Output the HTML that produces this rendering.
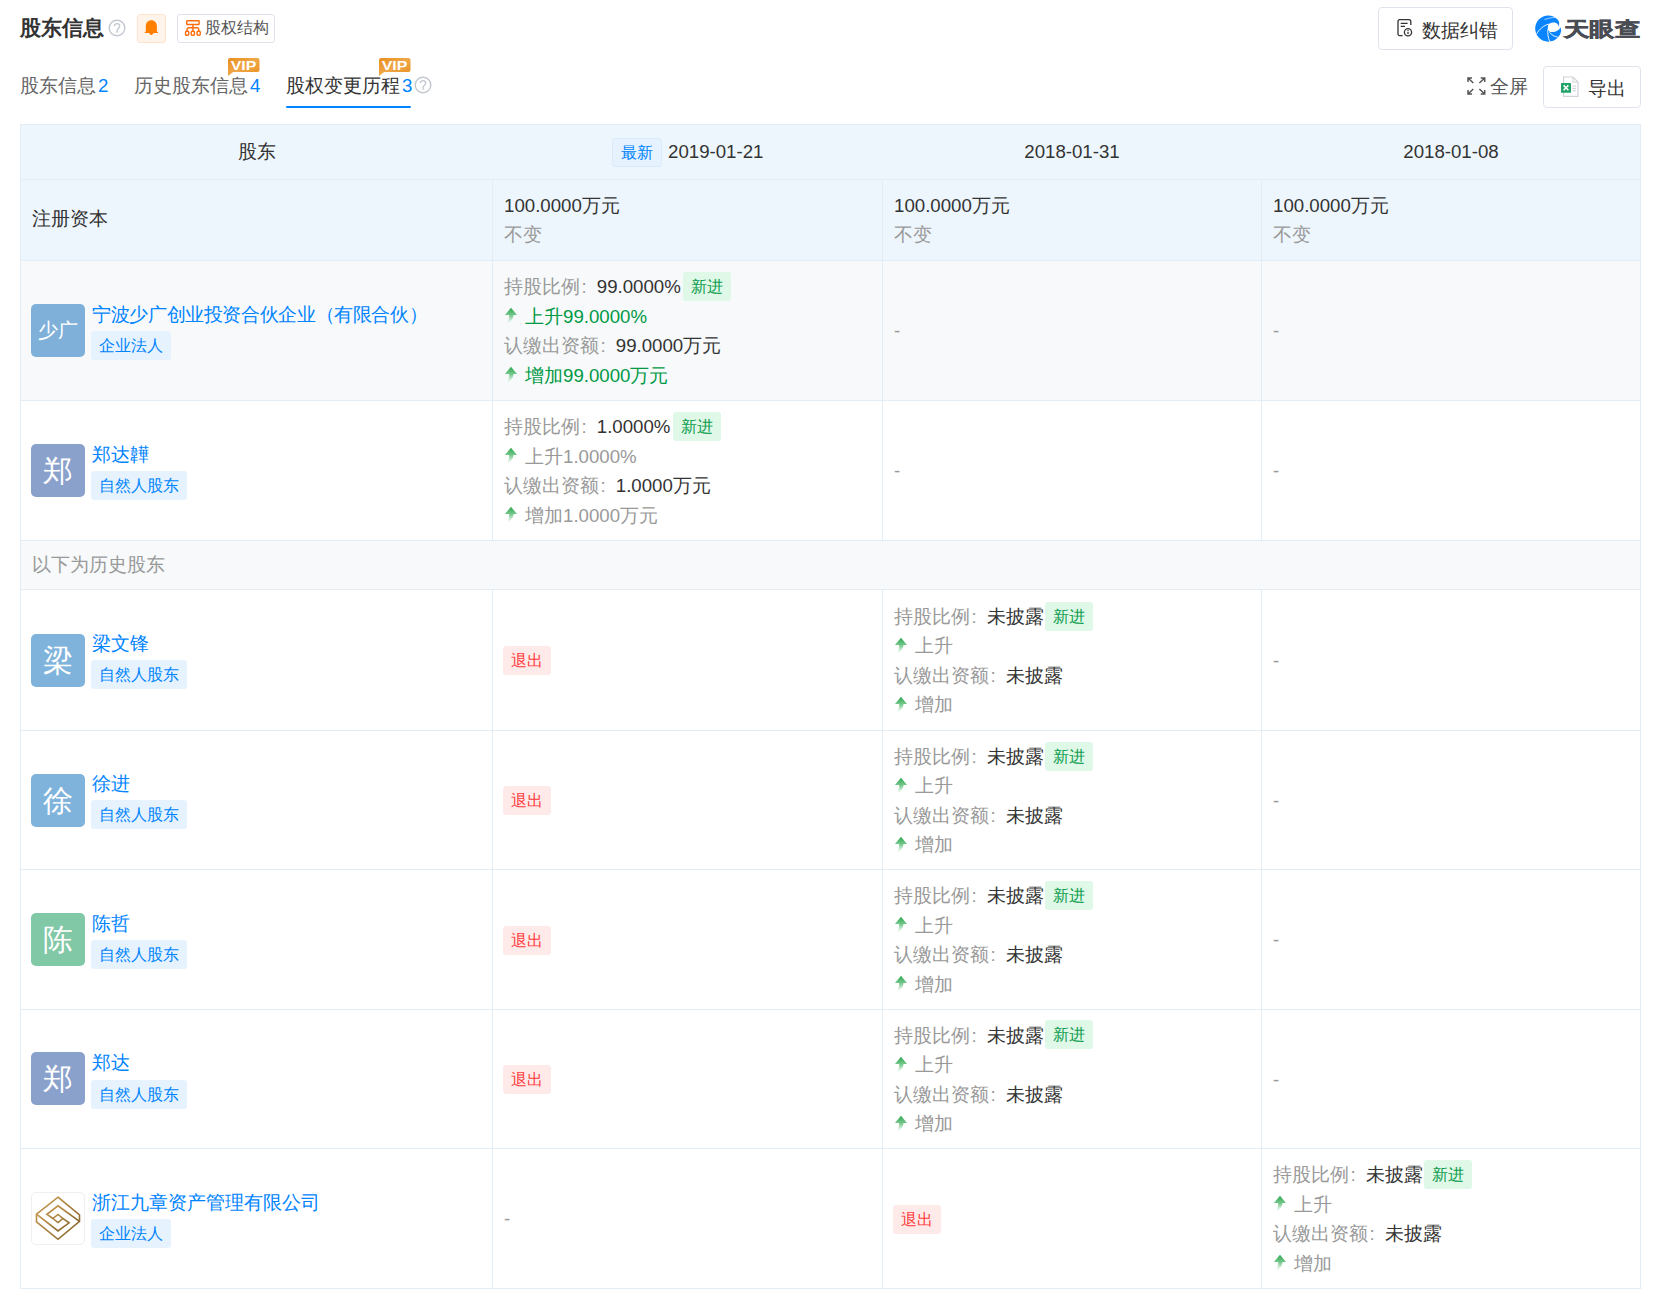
<!DOCTYPE html><html><head><meta charset="utf-8"><style>
*{box-sizing:border-box;margin:0;padding:0}
html,body{width:1659px;height:1311px;overflow:hidden;background:#fff}
body{position:relative;font-family:"Liberation Sans",sans-serif;color:#333;font-size:18.67px}
.ab{position:absolute;white-space:nowrap}
.t{position:absolute;white-space:nowrap;line-height:1}
.hl{position:absolute;height:1px;background:#e3edf6}
.vl{position:absolute;width:1px;background:#e3edf6}
.bg{position:absolute}
.tag{position:absolute;height:29px;border-radius:3px;font-size:16px;line-height:30px;text-align:center}
.tb{background:#e6f3fe;color:#0084ff}
.tg{background:#dff8e8;color:#0f9d4e}
.tr{background:#ffeaea;color:#ff3b3b}
.av{position:absolute;width:54px;height:53px;border-radius:5px;color:#fff;text-align:center;line-height:53px;font-size:28px}
.nm{color:#0084ff}
.gy{color:#999}
.gn{color:#009a44}
.dk{color:#333}
.cl{display:inline-block;width:16.8px;padding-left:1.5px}
</style></head><body>
<div class="t" style="left:20px;top:18px;font-size:21.33px;font-weight:bold;color:#333">股东信息</div>
<svg class="ab" style="left:108px;top:19px" width="18" height="18" viewBox="0 0 18 18"><circle cx="9" cy="9" r="7.8" fill="none" stroke="#c3c8d0" stroke-width="1.4"/><path d="M6.4 7.3c0-1.6 1.2-2.7 2.7-2.7s2.6 1.1 2.6 2.5c0 2-2.6 2.2-2.6 4.4v2.3" fill="none" stroke="#c3c8d0" stroke-width="1.4"/></svg>
<div class="ab" style="left:137px;top:14px;width:29px;height:29px;border:1px solid #ffe3cc;background:#fff4ea;border-radius:3px"></div>
<svg class="ab" style="left:144px;top:20px" width="15" height="16" viewBox="0 0 15 16"><path d="M7.3 .2C4 .2 1.8 2.8 1.8 6.2V11.6L.7 12.2V13.1H14V12.2L12.9 11.6V6.2C12.9 2.8 10.6 .2 7.3 .2z" fill="#ff7f00"/><path d="M5.3 13.1h4c0 1.1-.9 1.9-2 1.9s-2-.8-2-1.9z" fill="#ff7f00"/></svg>
<div class="ab" style="left:177px;top:14px;width:98px;height:29px;border:1px solid #dfe4ec;border-radius:3px"></div>
<svg class="ab" style="left:184px;top:19px" width="18" height="18" viewBox="0 0 18 18"><g fill="none" stroke="#ff6a0a" stroke-width="1.4"><rect x="2.7" y="1.7" width="12.4" height="3.8" rx=".6"/><path d="M8.9 5.5v3.3M3 12.3v-1.6a1.9 1.9 0 0 1 1.9-1.9h8a1.9 1.9 0 0 1 1.9 1.9v1.6M8.9 8.8v3.5"/><rect x="1.5" y="12.3" width="3.3" height="4" rx="1.2"/><rect x="7.2" y="12.3" width="3.3" height="4" rx="1.2"/><rect x="13" y="12.3" width="3.3" height="4" rx="1.2"/></g></svg>
<div class="t" style="left:205px;top:20px;font-size:16px;color:#555">股权结构</div>
<div class="t" style="left:20px;top:77px;color:#666">股东信息<span style="color:#0084ff;margin-left:2px">2</span></div>
<div class="t" style="left:134px;top:77px;color:#666">历史股东信息<span style="color:#0084ff;margin-left:2px">4</span></div>
<div class="t" style="left:286px;top:77px;color:#333">股权变更历程<span style="color:#0084ff;margin-left:2px">3</span></div>
<svg class="ab" style="left:414px;top:76px" width="18" height="18" viewBox="0 0 18 18"><circle cx="9" cy="9" r="7.8" fill="none" stroke="#c3c8d0" stroke-width="1.4"/><path d="M6.4 7.3c0-1.6 1.2-2.7 2.7-2.7s2.6 1.1 2.6 2.5c0 2-2.6 2.2-2.6 4.4v2.3" fill="none" stroke="#c3c8d0" stroke-width="1.4"/></svg>
<div class="ab" style="left:286px;top:106px;width:125px;height:2px;border-radius:1px;background:#0084ff"></div>
<svg class="ab" style="left:227px;top:57px" width="34" height="20" viewBox="0 0 34 20"><defs><linearGradient id="vg228" x1="0" y1="0" x2="1" y2="1"><stop offset="0" stop-color="#e88f1e"/><stop offset=".5" stop-color="#f0a748"/><stop offset="1" stop-color="#e8901f"/></linearGradient></defs><path d="M3 1h27.5a2 2 0 0 1 2 2v10a2 2 0 0 1-2 2H6.2L1 19V3a2 2 0 0 1 2-2z" fill="url(#vg228)"/><text x="3.8" y="12.8" font-family="Liberation Sans" font-weight="bold" font-size="13" fill="#fff" textLength="25.5" lengthAdjust="spacingAndGlyphs">VIP</text></svg>
<svg class="ab" style="left:378px;top:57px" width="34" height="20" viewBox="0 0 34 20"><defs><linearGradient id="vg379" x1="0" y1="0" x2="1" y2="1"><stop offset="0" stop-color="#e88f1e"/><stop offset=".5" stop-color="#f0a748"/><stop offset="1" stop-color="#e8901f"/></linearGradient></defs><path d="M3 1h27.5a2 2 0 0 1 2 2v10a2 2 0 0 1-2 2H6.2L1 19V3a2 2 0 0 1 2-2z" fill="url(#vg379)"/><text x="3.8" y="12.8" font-family="Liberation Sans" font-weight="bold" font-size="13" fill="#fff" textLength="25.5" lengthAdjust="spacingAndGlyphs">VIP</text></svg>
<div class="ab" style="left:1378px;top:7px;width:135px;height:43px;border:1px solid #dfe4ec;border-radius:4px"></div>
<svg class="ab" style="left:1397px;top:19px" width="17" height="18" viewBox="0 0 17 18"><g fill="none" stroke="#333" stroke-width="1.3"><path d="M5.6 16.6H2.6A1.6 1.6 0 0 1 1 15V2.3A1.6 1.6 0 0 1 2.6.7h9.6a1.6 1.6 0 0 1 1.6 1.6V5.9"/><path d="M3.7 4.4h6.9M3.7 7.4h4.3"/><circle cx="11" cy="13.2" r="3.6"/><path d="M11 12.7v2.2"/></g><circle cx="11" cy="11.4" r=".7" fill="#333"/></svg>
<div class="t" style="left:1422px;top:22px;color:#333">数据纠错</div>
<svg class="ab" style="left:1533px;top:14px" width="30" height="30" viewBox="0 0 30 30"><circle cx="15.3" cy="14.6" r="13.1" fill="#0a84ff"/><path d="M15.8 10.1C17.5 8.8 20.5 8 23 9 24.5 9.6 25.2 11 25.4 12.1L27.5 13.5C26.5 15.5 24.5 17 22 17.7 20 18.2 18 18.2 17 18 15.5 17 14.6 15 14.8 13 15 11.8 15.3 10.8 15.8 10.1z" fill="#fff"/><path d="M21.8 3.3C23.6 3.9 25.3 5.6 26 8 26.4 9.8 26 11.3 25.4 12.1L27.5 13.5C28 14.5 28.2 15.5 27.9 16.3H30V0H21.8z" fill="#fff"/><g fill="none" stroke="#fff" stroke-width=".9"><path d="M3.4 20.3C6.5 15 10.5 11.5 15.8 10.1"/><path d="M15 14.9C14.4 19 15 23.5 16.8 27.9"/><path d="M16.5 18.2C18.5 21 21.5 22.6 24.8 23.1"/></g><path d="M11.4 5.5C15 4.4 19 3.5 22 3.4" fill="none" stroke="#fff" stroke-width=".6"/></svg>
<div class="t" style="left:1564px;top:19px;font-size:20px;font-weight:bold;color:#4a4c53;-webkit-text-stroke:0.5px #4a4c53;transform:scaleX(1.27);transform-origin:0 0">天眼查</div>
<svg class="ab" style="left:1467px;top:77px" width="19" height="18" viewBox="0 0 19 18"><g fill="none" stroke="#555" stroke-width="1.5"><path d="M1 5V1h4M1 1l5.3 5"/><path d="M17.7 5V1h-4M17.7 1l-5.3 5"/><path d="M1 13v4h4M1 17l5.3-5"/><path d="M17.7 13v4h-4M17.7 17l-5.3-5"/></g></svg>
<div class="t" style="left:1490px;top:78px;color:#555">全屏</div>
<div class="ab" style="left:1543px;top:66px;width:98px;height:42px;border:1px solid #dfe4ec;border-radius:4px"></div>
<svg class="ab" style="left:1560px;top:76px" width="20" height="21" viewBox="0 0 20 21"><path d="M3.6 1h9.4l5 5v14.4H3.6z" fill="#fff" stroke="#d0d3d8" stroke-width="1.2"/><path d="M13 1v5h5" fill="none" stroke="#d0d3d8" stroke-width="1.1"/><path d="M12.5 10h3.5M12.5 12.4h3.5M12.5 14.8h3.5" stroke="#c5c8cc" stroke-width=".9"/><rect x="1" y="6.9" width="10" height="9.8" rx=".5" fill="#21a366"/><path d="M3.6 9.4l4.8 4.8M8.4 9.4l-4.8 4.8" stroke="#fff" stroke-width="1.5"/></svg>
<div class="t" style="left:1588px;top:80px;color:#333">导出</div>
<div class="bg" style="left:21px;top:125px;width:1619px;height:135px;background:#eef6fd"></div>
<div class="bg" style="left:21px;top:261px;width:1619px;height:139px;background:#f7f9fb"></div>
<div class="bg" style="left:21px;top:541px;width:1619px;height:48px;background:#f7f9fb"></div>
<div class="hl" style="left:20px;top:124px;width:1621px"></div>
<div class="hl" style="left:20px;top:179px;width:1621px"></div>
<div class="hl" style="left:20px;top:260px;width:1621px"></div>
<div class="hl" style="left:20px;top:400px;width:1621px"></div>
<div class="hl" style="left:20px;top:540px;width:1621px"></div>
<div class="hl" style="left:20px;top:589px;width:1621px"></div>
<div class="hl" style="left:20px;top:730px;width:1621px"></div>
<div class="hl" style="left:20px;top:869px;width:1621px"></div>
<div class="hl" style="left:20px;top:1009px;width:1621px"></div>
<div class="hl" style="left:20px;top:1148px;width:1621px"></div>
<div class="hl" style="left:20px;top:1288px;width:1621px"></div>
<div class="vl" style="left:20px;top:124px;height:1165px"></div>
<div class="vl" style="left:1640px;top:124px;height:1165px"></div>
<div class="vl" style="left:492px;top:179px;height:362px"></div>
<div class="vl" style="left:492px;top:589px;height:700px"></div>
<div class="vl" style="left:882px;top:179px;height:362px"></div>
<div class="vl" style="left:882px;top:589px;height:700px"></div>
<div class="vl" style="left:1261px;top:179px;height:362px"></div>
<div class="vl" style="left:1261px;top:589px;height:700px"></div>
<div class="t" style="left:21px;top:143px;width:472px;text-align:center">股东</div>
<div class="tag tb" style="left:612px;top:138px;width:50px;border:1px solid #d9ebfb;line-height:28px">最新</div>
<div class="t" style="left:668px;top:143px">2019-01-21</div>
<div class="t" style="left:883px;top:143px;width:378px;text-align:center">2018-01-31</div>
<div class="t" style="left:1262px;top:143px;width:378px;text-align:center">2018-01-08</div>
<div class="t" style="left:32px;top:210px">注册资本</div>
<div class="t" style="left:504px;top:197px">100.0000万元</div>
<div class="t gy" style="left:504px;top:226px">不变</div>
<div class="t" style="left:894px;top:197px">100.0000万元</div>
<div class="t gy" style="left:894px;top:226px">不变</div>
<div class="t" style="left:1273px;top:197px">100.0000万元</div>
<div class="t gy" style="left:1273px;top:226px">不变</div>
<div class="av" style="left:31px;top:304px;background:#7fb0d9;font-size:20px">少广</div>
<div class="t nm" style="left:92px;top:305.5px;letter-spacing:-0.37px">宁波少广创业投资合伙企业（有限合伙）</div>
<div class="tag tb" style="left:91px;top:331px;width:80px">企业法人</div>
<div class="t gy" style="left:504px;top:278.0px">持股比例<span class="cl">:</span><span class="dk">99.0000%</span></div>
<div class="tag tg" style="left:683px;top:272px;width:48px">新进</div>
<div class="ab" style="left:504px;top:307.0px;width:14px;height:17px"><svg width="14" height="17" viewBox="0 0 14 17" style="position:absolute;left:0;top:0px"><defs><linearGradient id="ag1" x1="0" y1="0" x2="0" y2="1"><stop offset="0" stop-color="#30a750"/><stop offset=".5" stop-color="#7bcb92"/><stop offset="1" stop-color="#a5dcb3" stop-opacity="0"/></linearGradient></defs><path d="M7 .8L13 7.9H9.5C9.3 11.5 7.2 14.8 2.4 16.6 4.6 14 5.2 11 5.2 7.9H.9z" fill="url(#ag1)"/></svg></div>
<div class="t gn" style="left:525px;top:307.5px">上升99.0000%</div>
<div class="t gy" style="left:504px;top:337.0px">认缴出资额<span class="cl">:</span><span class="dk">99.0000万元</span></div>
<div class="ab" style="left:504px;top:366.0px;width:14px;height:17px"><svg width="14" height="17" viewBox="0 0 14 17" style="position:absolute;left:0;top:0px"><defs><linearGradient id="ag2" x1="0" y1="0" x2="0" y2="1"><stop offset="0" stop-color="#30a750"/><stop offset=".5" stop-color="#7bcb92"/><stop offset="1" stop-color="#a5dcb3" stop-opacity="0"/></linearGradient></defs><path d="M7 .8L13 7.9H9.5C9.3 11.5 7.2 14.8 2.4 16.6 4.6 14 5.2 11 5.2 7.9H.9z" fill="url(#ag2)"/></svg></div>
<div class="t gn" style="left:525px;top:366.5px">增加99.0000万元</div>
<div class="t gy" style="left:894px;top:322.0px">-</div>
<div class="t gy" style="left:1273px;top:322.0px">-</div>
<div class="av" style="left:31px;top:444px;background:#8aa1cc;font-size:29.5px">郑</div>
<div class="t nm" style="left:92px;top:445.5px">郑达韡</div>
<div class="tag tb" style="left:91px;top:471px;width:96px">自然人股东</div>
<div class="t gy" style="left:504px;top:418.0px">持股比例<span class="cl">:</span><span class="dk">1.0000%</span></div>
<div class="tag tg" style="left:673px;top:412px;width:48px">新进</div>
<div class="ab" style="left:504px;top:447.0px;width:14px;height:17px"><svg width="14" height="17" viewBox="0 0 14 17" style="position:absolute;left:0;top:0px"><defs><linearGradient id="ag3" x1="0" y1="0" x2="0" y2="1"><stop offset="0" stop-color="#30a750"/><stop offset=".5" stop-color="#7bcb92"/><stop offset="1" stop-color="#a5dcb3" stop-opacity="0"/></linearGradient></defs><path d="M7 .8L13 7.9H9.5C9.3 11.5 7.2 14.8 2.4 16.6 4.6 14 5.2 11 5.2 7.9H.9z" fill="url(#ag3)"/></svg></div>
<div class="t gy" style="left:525px;top:447.5px">上升1.0000%</div>
<div class="t gy" style="left:504px;top:477.0px">认缴出资额<span class="cl">:</span><span class="dk">1.0000万元</span></div>
<div class="ab" style="left:504px;top:506.0px;width:14px;height:17px"><svg width="14" height="17" viewBox="0 0 14 17" style="position:absolute;left:0;top:0px"><defs><linearGradient id="ag4" x1="0" y1="0" x2="0" y2="1"><stop offset="0" stop-color="#30a750"/><stop offset=".5" stop-color="#7bcb92"/><stop offset="1" stop-color="#a5dcb3" stop-opacity="0"/></linearGradient></defs><path d="M7 .8L13 7.9H9.5C9.3 11.5 7.2 14.8 2.4 16.6 4.6 14 5.2 11 5.2 7.9H.9z" fill="url(#ag4)"/></svg></div>
<div class="t gy" style="left:525px;top:506.5px">增加1.0000万元</div>
<div class="t gy" style="left:894px;top:462.0px">-</div>
<div class="t gy" style="left:1273px;top:462.0px">-</div>
<div class="t gy" style="left:32px;top:555.5px">以下为历史股东</div>
<div class="av" style="left:31px;top:634px;background:#7fb3dc;font-size:29.5px">梁</div>
<div class="t nm" style="left:92px;top:635.0px">梁文锋</div>
<div class="tag tb" style="left:91px;top:660px;width:96px">自然人股东</div>
<div class="tag tr" style="left:503px;top:646px;width:48px">退出</div>
<div class="t gy" style="left:894px;top:607.5px">持股比例<span class="cl">:</span><span class="dk">未披露</span></div>
<div class="tag tg" style="left:1045px;top:602px;width:48px">新进</div>
<div class="ab" style="left:894px;top:636.5px;width:14px;height:17px"><svg width="14" height="17" viewBox="0 0 14 17" style="position:absolute;left:0;top:0px"><defs><linearGradient id="ag5" x1="0" y1="0" x2="0" y2="1"><stop offset="0" stop-color="#30a750"/><stop offset=".5" stop-color="#7bcb92"/><stop offset="1" stop-color="#a5dcb3" stop-opacity="0"/></linearGradient></defs><path d="M7 .8L13 7.9H9.5C9.3 11.5 7.2 14.8 2.4 16.6 4.6 14 5.2 11 5.2 7.9H.9z" fill="url(#ag5)"/></svg></div>
<div class="t gy" style="left:915px;top:637.0px">上升</div>
<div class="t gy" style="left:894px;top:666.5px">认缴出资额<span class="cl">:</span><span class="dk">未披露</span></div>
<div class="ab" style="left:894px;top:695.5px;width:14px;height:17px"><svg width="14" height="17" viewBox="0 0 14 17" style="position:absolute;left:0;top:0px"><defs><linearGradient id="ag6" x1="0" y1="0" x2="0" y2="1"><stop offset="0" stop-color="#30a750"/><stop offset=".5" stop-color="#7bcb92"/><stop offset="1" stop-color="#a5dcb3" stop-opacity="0"/></linearGradient></defs><path d="M7 .8L13 7.9H9.5C9.3 11.5 7.2 14.8 2.4 16.6 4.6 14 5.2 11 5.2 7.9H.9z" fill="url(#ag6)"/></svg></div>
<div class="t gy" style="left:915px;top:696.0px">增加</div>
<div class="t gy" style="left:1273px;top:651.5px">-</div>
<div class="av" style="left:31px;top:774px;background:#7fb3dc;font-size:29.5px">徐</div>
<div class="t nm" style="left:92px;top:775.0px">徐进</div>
<div class="tag tb" style="left:91px;top:800px;width:96px">自然人股东</div>
<div class="tag tr" style="left:503px;top:786px;width:48px">退出</div>
<div class="t gy" style="left:894px;top:747.5px">持股比例<span class="cl">:</span><span class="dk">未披露</span></div>
<div class="tag tg" style="left:1045px;top:742px;width:48px">新进</div>
<div class="ab" style="left:894px;top:776.5px;width:14px;height:17px"><svg width="14" height="17" viewBox="0 0 14 17" style="position:absolute;left:0;top:0px"><defs><linearGradient id="ag7" x1="0" y1="0" x2="0" y2="1"><stop offset="0" stop-color="#30a750"/><stop offset=".5" stop-color="#7bcb92"/><stop offset="1" stop-color="#a5dcb3" stop-opacity="0"/></linearGradient></defs><path d="M7 .8L13 7.9H9.5C9.3 11.5 7.2 14.8 2.4 16.6 4.6 14 5.2 11 5.2 7.9H.9z" fill="url(#ag7)"/></svg></div>
<div class="t gy" style="left:915px;top:777.0px">上升</div>
<div class="t gy" style="left:894px;top:806.5px">认缴出资额<span class="cl">:</span><span class="dk">未披露</span></div>
<div class="ab" style="left:894px;top:835.5px;width:14px;height:17px"><svg width="14" height="17" viewBox="0 0 14 17" style="position:absolute;left:0;top:0px"><defs><linearGradient id="ag8" x1="0" y1="0" x2="0" y2="1"><stop offset="0" stop-color="#30a750"/><stop offset=".5" stop-color="#7bcb92"/><stop offset="1" stop-color="#a5dcb3" stop-opacity="0"/></linearGradient></defs><path d="M7 .8L13 7.9H9.5C9.3 11.5 7.2 14.8 2.4 16.6 4.6 14 5.2 11 5.2 7.9H.9z" fill="url(#ag8)"/></svg></div>
<div class="t gy" style="left:915px;top:836.0px">增加</div>
<div class="t gy" style="left:1273px;top:791.5px">-</div>
<div class="av" style="left:31px;top:913px;background:#80c8a6;font-size:29.5px">陈</div>
<div class="t nm" style="left:92px;top:914.5px">陈哲</div>
<div class="tag tb" style="left:91px;top:940px;width:96px">自然人股东</div>
<div class="tag tr" style="left:503px;top:926px;width:48px">退出</div>
<div class="t gy" style="left:894px;top:887.0px">持股比例<span class="cl">:</span><span class="dk">未披露</span></div>
<div class="tag tg" style="left:1045px;top:881px;width:48px">新进</div>
<div class="ab" style="left:894px;top:916.0px;width:14px;height:17px"><svg width="14" height="17" viewBox="0 0 14 17" style="position:absolute;left:0;top:0px"><defs><linearGradient id="ag9" x1="0" y1="0" x2="0" y2="1"><stop offset="0" stop-color="#30a750"/><stop offset=".5" stop-color="#7bcb92"/><stop offset="1" stop-color="#a5dcb3" stop-opacity="0"/></linearGradient></defs><path d="M7 .8L13 7.9H9.5C9.3 11.5 7.2 14.8 2.4 16.6 4.6 14 5.2 11 5.2 7.9H.9z" fill="url(#ag9)"/></svg></div>
<div class="t gy" style="left:915px;top:916.5px">上升</div>
<div class="t gy" style="left:894px;top:946.0px">认缴出资额<span class="cl">:</span><span class="dk">未披露</span></div>
<div class="ab" style="left:894px;top:975.0px;width:14px;height:17px"><svg width="14" height="17" viewBox="0 0 14 17" style="position:absolute;left:0;top:0px"><defs><linearGradient id="ag10" x1="0" y1="0" x2="0" y2="1"><stop offset="0" stop-color="#30a750"/><stop offset=".5" stop-color="#7bcb92"/><stop offset="1" stop-color="#a5dcb3" stop-opacity="0"/></linearGradient></defs><path d="M7 .8L13 7.9H9.5C9.3 11.5 7.2 14.8 2.4 16.6 4.6 14 5.2 11 5.2 7.9H.9z" fill="url(#ag10)"/></svg></div>
<div class="t gy" style="left:915px;top:975.5px">增加</div>
<div class="t gy" style="left:1273px;top:931.0px">-</div>
<div class="av" style="left:31px;top:1052px;background:#8aa1cc;font-size:29.5px">郑</div>
<div class="t nm" style="left:92px;top:1054.0px">郑达</div>
<div class="tag tb" style="left:91px;top:1080px;width:96px">自然人股东</div>
<div class="tag tr" style="left:503px;top:1065px;width:48px">退出</div>
<div class="t gy" style="left:894px;top:1026.5px">持股比例<span class="cl">:</span><span class="dk">未披露</span></div>
<div class="tag tg" style="left:1045px;top:1020px;width:48px">新进</div>
<div class="ab" style="left:894px;top:1055.5px;width:14px;height:17px"><svg width="14" height="17" viewBox="0 0 14 17" style="position:absolute;left:0;top:0px"><defs><linearGradient id="ag11" x1="0" y1="0" x2="0" y2="1"><stop offset="0" stop-color="#30a750"/><stop offset=".5" stop-color="#7bcb92"/><stop offset="1" stop-color="#a5dcb3" stop-opacity="0"/></linearGradient></defs><path d="M7 .8L13 7.9H9.5C9.3 11.5 7.2 14.8 2.4 16.6 4.6 14 5.2 11 5.2 7.9H.9z" fill="url(#ag11)"/></svg></div>
<div class="t gy" style="left:915px;top:1056.0px">上升</div>
<div class="t gy" style="left:894px;top:1085.5px">认缴出资额<span class="cl">:</span><span class="dk">未披露</span></div>
<div class="ab" style="left:894px;top:1114.5px;width:14px;height:17px"><svg width="14" height="17" viewBox="0 0 14 17" style="position:absolute;left:0;top:0px"><defs><linearGradient id="ag12" x1="0" y1="0" x2="0" y2="1"><stop offset="0" stop-color="#30a750"/><stop offset=".5" stop-color="#7bcb92"/><stop offset="1" stop-color="#a5dcb3" stop-opacity="0"/></linearGradient></defs><path d="M7 .8L13 7.9H9.5C9.3 11.5 7.2 14.8 2.4 16.6 4.6 14 5.2 11 5.2 7.9H.9z" fill="url(#ag12)"/></svg></div>
<div class="t gy" style="left:915px;top:1115.0px">增加</div>
<div class="t gy" style="left:1273px;top:1070.5px">-</div>
<div class="ab" style="left:31px;top:1192px;width:54px;height:53px;border:1px solid #efefef;border-radius:5px;background:#fff"></div>
<svg class="ab" style="left:28px;top:1188px" width="60" height="60" viewBox="0 0 60 60"><defs><linearGradient id="lg" x1="0" y1="0" x2="1" y2="1"><stop offset="0" stop-color="#c89a4c"/><stop offset="1" stop-color="#85622c"/></linearGradient></defs><g fill="none" stroke="url(#lg)" stroke-width="1.6" stroke-linejoin="miter"><path d="M30 9.2L51.5 27V33.4L30 51.3 8.5 33.9V26.1z"/><path d="M8.5 26.1L30 43 41.1 34.8 35 30.5 30 34.5 25 30.5 30 26.5 35 30.5"/><path d="M25 30.5L18.9 26.3 30 17.8 51.5 33.4"/></g></svg>
<div class="t nm" style="left:92px;top:1193.5px">浙江九章资产管理有限公司</div>
<div class="tag tb" style="left:91px;top:1219px;width:80px">企业法人</div>
<div class="t gy" style="left:504px;top:1210.0px">-</div>
<div class="tag tr" style="left:893px;top:1205px;width:48px">退出</div>
<div class="t gy" style="left:1273px;top:1166.0px">持股比例<span class="cl">:</span><span class="dk">未披露</span></div>
<div class="tag tg" style="left:1424px;top:1160px;width:48px">新进</div>
<div class="ab" style="left:1273px;top:1195.0px;width:14px;height:17px"><svg width="14" height="17" viewBox="0 0 14 17" style="position:absolute;left:0;top:0px"><defs><linearGradient id="ag13" x1="0" y1="0" x2="0" y2="1"><stop offset="0" stop-color="#30a750"/><stop offset=".5" stop-color="#7bcb92"/><stop offset="1" stop-color="#a5dcb3" stop-opacity="0"/></linearGradient></defs><path d="M7 .8L13 7.9H9.5C9.3 11.5 7.2 14.8 2.4 16.6 4.6 14 5.2 11 5.2 7.9H.9z" fill="url(#ag13)"/></svg></div>
<div class="t gy" style="left:1294px;top:1195.5px">上升</div>
<div class="t gy" style="left:1273px;top:1225.0px">认缴出资额<span class="cl">:</span><span class="dk">未披露</span></div>
<div class="ab" style="left:1273px;top:1254.0px;width:14px;height:17px"><svg width="14" height="17" viewBox="0 0 14 17" style="position:absolute;left:0;top:0px"><defs><linearGradient id="ag14" x1="0" y1="0" x2="0" y2="1"><stop offset="0" stop-color="#30a750"/><stop offset=".5" stop-color="#7bcb92"/><stop offset="1" stop-color="#a5dcb3" stop-opacity="0"/></linearGradient></defs><path d="M7 .8L13 7.9H9.5C9.3 11.5 7.2 14.8 2.4 16.6 4.6 14 5.2 11 5.2 7.9H.9z" fill="url(#ag14)"/></svg></div>
<div class="t gy" style="left:1294px;top:1254.5px">增加</div>
</body></html>
